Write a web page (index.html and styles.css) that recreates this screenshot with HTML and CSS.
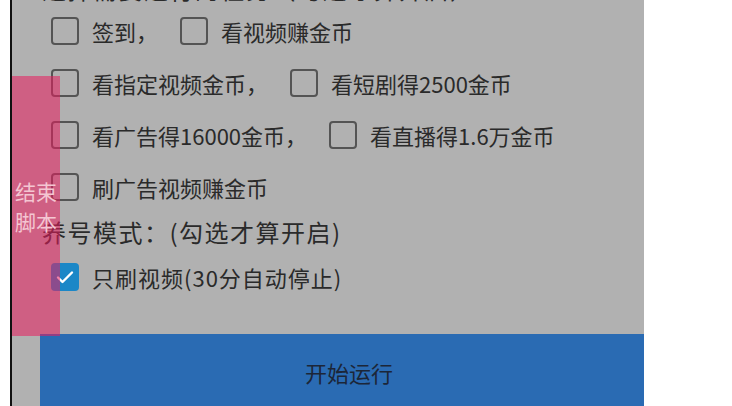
FILE: index.html
```html
<!DOCTYPE html>
<html lang="zh-CN">
<head>
    <meta charset="UTF-8">
    <title>脚本设置</title>
    <link rel="stylesheet" href="styles.css">
</head>
<body>
    <div class="screen">
        <p class="section-title cut">选择需要运行的任务（勾选才算开启）</p>

        <div class="row">
            <label class="item"><span class="box"></span>签到，</label>
            <label class="item"><span class="box"></span>看视频赚金币</label>
        </div>
        <div class="row">
            <label class="item"><span class="box"></span>看指定视频金币，</label>
            <label class="item"><span class="box"></span>看短剧得2500金币</label>
        </div>
        <div class="row">
            <label class="item"><span class="box"></span>看广告得16000金币，</label>
            <label class="item"><span class="box"></span>看直播得1.6万金币</label>
        </div>
        <div class="row">
            <label class="item"><span class="box"></span>刷广告视频赚金币</label>
        </div>

        <p class="section-title">养号模式：(勾选才算开启)</p>

        <div class="row">
            <label class="item wide"><span class="box checked">
                <svg viewBox="0 0 28 28" width="28" height="28"><path d="M7 14.5l4.5 4.5L21 9.5" fill="none" stroke="#fff" stroke-width="2.4" stroke-linecap="round" stroke-linejoin="round"/></svg>
            </span>只刷视频(30分自动停止)</label>
        </div>

        <button class="start-btn">开始运行</button>

        <!-- floating stop button over the page -->
        <div class="float-stop">结束<br>脚本</div>
    </div>
</body>
</html>
```

FILE: styles.css
```css
html, body {
    margin: 0;
    padding: 0;
    background: #fff;
    overflow: hidden;
}
body {
    font-family: "Noto Sans CJK SC", "Noto Sans", sans-serif;
    color: #2a2a2a;
}
.screen {
    position: relative;
    margin-left: 10px;
    width: 632px;
    height: 406px;
    border-left: 2px solid #111;
    background-color: #b1b1b1;
    overflow: hidden;
    display: flex;
    flex-direction: column;
}
.section-title {
    margin: 0;
    padding-left: 30px;
    height: 38px;
    line-height: 38px;
    font-size: 24px;
    letter-spacing: 1.5px;
    color: #2a2a2a;
}
.section-title.cut {
    margin-top: -30px;
    margin-bottom: -3px;
}
.row {
    display: flex;
    align-items: center;
    height: 52px;
    padding-left: 39px;
}
.item {
    display: flex;
    align-items: center;
    font-size: 22px;
    margin-right: 22px;
    white-space: nowrap;
}
.item.wide {
    letter-spacing: 1px;
}
.box {
    box-sizing: border-box;
    width: 28px;
    height: 28px;
    border: 2.5px solid #545454;
    border-radius: 4px;
    margin-right: 13px;
    flex-shrink: 0;
}
.box.checked {
    border: none;
    background-color: #1b87c7;
    display: flex;
}
.start-btn {
    margin: auto 0 0 28px;
    height: 72px;
    border: none;
    background-color: #2a6bb3;
    color: #1c2638;
    font-family: inherit;
    font-size: 22px;
    padding: 4px 0 0 14px;
}
.float-stop {
    position: absolute;
    left: 0;
    top: 76px;
    width: 48px;
    height: 260px;
    background-color: rgba(232, 28, 92, 0.55);
    color: #f4c6d2;
    font-size: 21px;
    line-height: 30px;
    text-align: center;
    display: flex;
    align-items: center;
    justify-content: center;
}
```
